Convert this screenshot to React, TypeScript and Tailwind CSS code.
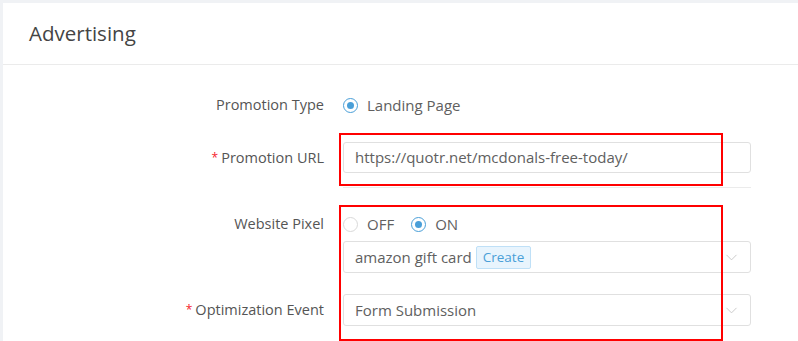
import { ChevronDown } from "lucide-react";

function Radio({ checked, label }: { checked?: boolean; label: string }) {
    return (
        <label className="flex items-center gap-[9px]">
            <span
                className={
                    checked
                        ? "flex h-[15px] w-[15px] items-center justify-center rounded-full border border-[#4a9fd8] bg-white"
                        : "flex h-[15px] w-[15px] items-center justify-center rounded-full border border-[#d9d9d9] bg-white"
                }
            >
                {checked && <span className="h-[7px] w-[7px] rounded-full bg-[#4a9fd8]" />}
            </span>
            <span>{label}</span>
        </label>
    );
}

function Label({ text, required }: { text: string; required?: boolean }) {
    return (
        <div className="flex items-center justify-end text-[14.5px] text-[#555]">
            {required && <span className="mr-[3px] text-[12px] text-[#f5222d]">*</span>}
            {text}
        </div>
    );
}

export default function App() {
    return (
        <div
            className="relative h-[341px] w-[798px] overflow-hidden bg-[#f0f2f5] pl-[3px] pt-[3px] text-[15px] text-[#606060]"
            style={{ fontFamily: '"Open Sans", "Noto Sans", sans-serif' }}
        >
            <div className="h-full bg-white">
                <div className="flex h-[62px] items-center border-b border-[#ebebeb] pl-[26px] text-[20.5px] text-[#444]">
                    Advertising
                </div>

                <div className="grid grid-cols-[321px_408px] gap-x-[19px]">
                    {/* promotion type */}
                    <div className="mt-[29px] flex h-[22px] items-center justify-end">
                        <Label text="Promotion Type" />
                    </div>
                    <div className="mt-[29px] flex h-[22px] items-center">
                        <Radio checked label="Landing Page" />
                    </div>

                    {/* promotion url */}
                    <div className="mt-[26px] flex h-[31px] items-center justify-end">
                        <Label text="Promotion URL" required />
                    </div>
                    <div className="mt-[26px] flex h-[31px] items-center rounded-[3px] border border-[#e0e0e0] px-[11px]">
                        https://quotr.net/mcdonals-free-today/
                    </div>

                    <div />
                    <div className="mt-[14px] h-px bg-[#ebebeb]" />

                    {/* website pixel */}
                    <div className="mt-[25px] flex h-[22px] items-center justify-end">
                        <Label text="Website Pixel" />
                    </div>
                    <div className="mt-[25px] flex h-[22px] items-center gap-[17px]">
                        <Radio label="OFF" />
                        <Radio checked label="ON" />
                    </div>

                    <div />
                    <div className="mt-[6px] flex h-[32px] items-center rounded-[3px] border border-[#e0e0e0] pl-[11px] pr-[9px]">
                        <span>amazon gift card</span>
                        <span className="ml-[4px] flex h-[23px] items-center rounded-[2px] border border-[#bfe0f7] bg-[#e8f4fd] px-[6px] text-[13.5px] text-[#4a9fd8]">
                            Create
                        </span>
                        <ChevronDown className="ml-auto text-[#c8c8c8]" size={19} strokeWidth={1.2} />
                    </div>

                    {/* optimization event */}
                    <div className="mt-[21px] flex h-[32px] items-center justify-end">
                        <Label text="Optimization Event" required />
                    </div>
                    <div className="mt-[21px] flex h-[32px] items-center rounded-[3px] border border-[#e0e0e0] pl-[11px] pr-[9px]">
                        <span>Form Submission</span>
                        <ChevronDown className="ml-auto text-[#c8c8c8]" size={19} strokeWidth={1.2} />
                    </div>
                </div>
            </div>

            {/* highlight boxes */}
            <div className="absolute left-[339px] top-[133px] h-[53px] w-[384px] border-2 border-[#ff0000]" />
            <div className="absolute left-[339px] top-[205px] h-[136px] w-[384px] border-2 border-[#ff0000]" />
        </div>
    );
}
